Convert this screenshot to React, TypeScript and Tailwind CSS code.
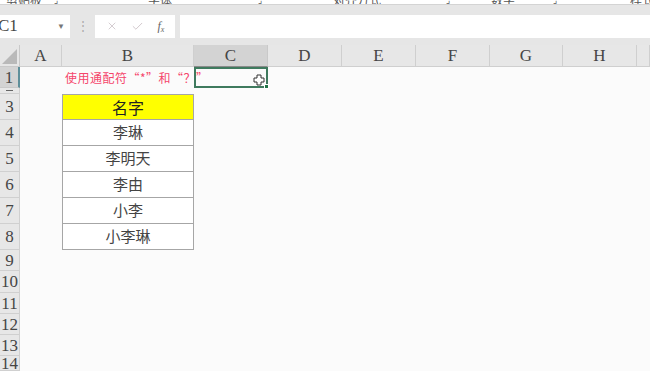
import { Check, X } from 'lucide-react';

const cols = [
  { k: 'A' },
  { k: 'B' },
  { k: 'C' },
  { k: 'D' },
  { k: 'E' },
  { k: 'F' },
  { k: 'G' },
  { k: 'H' },
  { k: '' },
];

const rows = [1, 2, 3, 4, 5, 6, 7, 8, 9, 10, 11, 12, 13, 14];

const names: Record<number, string> = {
  3: '名字',
  4: '李琳',
  5: '李明天',
  6: '李由',
  7: '小李',
  8: '小李琳',
};

const serif = { fontFamily: '"Liberation Serif", "Noto Sans CJK SC", serif' };
const cjk = { fontFamily: '"Noto Sans CJK SC", sans-serif' };

const Ribbon = () => (
  <div className="h-[5px] overflow-hidden bg-white flex items-end text-[12px] text-[#555] border-b border-[#d4d4d4]" style={cjk}>
    <div className="flex items-center -mb-[5px] whitespace-nowrap">
      <span className="ml-[6px] w-[42px]">剪贴板</span>
      <span className="ml-[6px] w-[94px] text-[9px]">⌟</span>
      <span className="w-[110px]">字体</span>
      <span className="w-[75px] text-[9px]">⌟</span>
      <span className="w-[113px]">对齐方式</span>
      <span className="w-[45px] text-[9px]">⌟</span>
      <span className="w-[62px]">数字</span>
      <span className="w-[77px] text-[9px]">⌟</span>
      <span>样式</span>
    </div>
  </div>
);

const FormulaBar = () => (
  <div className="h-[40px] bg-[#e6e6e6] flex items-center pt-[2px]">
    <div className="w-[70px] h-[23px] bg-white flex items-center justify-between pr-[5px] overflow-hidden">
      <span className="text-[17px] text-[#444] -ml-[2px]" style={serif}>C1</span>
      <span className="text-[8px] text-[#777]">▼</span>
    </div>
    <div className="w-[25px] flex justify-center text-[#aaa] text-[12px] leading-none">⋮</div>
    <div className="w-[80px] h-[23px] bg-white flex items-center justify-around px-[4px]">
      <X size={12} className="text-[#c7bcc2]" strokeWidth={1.5} />
      <Check size={13} className="text-[#c7bcc2]" strokeWidth={1.5} />
      <span className="text-[12px] italic text-[#666]" style={serif}>f<sub className="text-[8px]">x</sub></span>
    </div>
    <div className="flex-1 h-[23px] bg-white ml-[5px]" />
  </div>
);

export default function App() {
  return (
    <div className="w-[650px] h-[371px] overflow-hidden bg-[#fbfbfb] select-none">
      <Ribbon />
      <FormulaBar />
      <div className="relative grid grid-cols-[20px_42px_132px_74px_74px_74px_74px_73px_74px_1fr] grid-rows-[22px_21px_6px_26px_26px_26px_26px_26px_26px_21px_22px_21px_21px_21px_1fr] h-[326px]">
        <div className="bg-[#e6e6e6] border-b border-r border-[#c9c9c9] relative overflow-hidden">
          <div className="absolute right-[2px] bottom-[2px] w-0 h-0 border-l-[15px] border-l-transparent border-b-[15px] border-b-[#b9b9b9]" />
        </div>
        {cols.map((c) => (
          <div
            key={c.k || 'x'}
            className={
              c.k === 'C'
                ? 'bg-[#d3d3d3] border-b border-[#8b8b8b] border-r border-r-[#c9c9c9] flex items-center justify-center text-[17px] text-[#454545]'
                : 'bg-[#e7e7e7] border-b border-r border-[#cfcfcf] flex items-center justify-center text-[17px] text-[#454545]'
            }
            style={serif}
          >
            {c.k}
          </div>
        ))}
        {rows.map((r) => [
          <div
            key={'h' + r}
            className={
              r === 1
                ? 'bg-[#d3d3d3] border-r-2 border-r-[#5f8f9a] border-b border-b-[#c9c9c9] flex items-center justify-center text-[17px] text-[#454545] overflow-hidden leading-none'
                : r === 2
                  ? 'bg-[#e7e7e7] border-r border-b border-[#d0d0d0] overflow-hidden'
                  : 'bg-[#e7e7e7] border-r border-b border-[#d0d0d0] flex items-center justify-center text-[17px] text-[#454545] overflow-hidden leading-none'
            }
            style={serif}
          >
            {r === 2 ? <div className="mx-auto mt-[1px] w-[7px] h-[2px] border-b border-[#666]" /> : r}
          </div>,
          <div key={'a' + r} />,
          r === 1 ? (
            <div key={'b' + r} className="relative z-0 flex items-center">
              <span className="ml-[3px] whitespace-nowrap text-[12px] text-[#f5466b] tracking-[0.5px]" style={cjk}>
                使用通配符“*”和“？”
              </span>
            </div>
          ) : names[r] ? (
            <div
              key={'b' + r}
              className={
                r === 3
                  ? 'bg-[#ffff00] border border-[#a6a6a6] flex items-center justify-center text-[16px] text-[#222]'
                  : 'bg-white border-x border-b border-[#a6a6a6] flex items-center justify-center text-[15px] text-[#444]'
              }
              style={cjk}
            >
              {names[r]}
            </div>
          ) : (
            <div key={'b' + r} />
          ),
          r === 1 ? (
            <div key={'c' + r} className="relative z-10 border-2 border-[#3f7a5e]">
              <div className="absolute -right-[3px] -bottom-[3px] w-[5px] h-[5px] bg-[#217346] border border-white" />
              <svg className="absolute right-[1px] top-[5px]" width="12" height="12" viewBox="0 0 12 12">
                <path d="M4 1h4v3h3v4H8v3H4V8H1V4h3z" fill="#fff" stroke="#333" strokeWidth="1" />
              </svg>
            </div>
          ) : (
            <div key={'c' + r} />
          ),
          <div key={'d' + r} />,
          <div key={'e' + r} />,
          <div key={'f' + r} />,
          <div key={'g' + r} />,
          <div key={'i' + r} />,
          <div key={'j' + r} />,
        ])}
      </div>
    </div>
  );
}
